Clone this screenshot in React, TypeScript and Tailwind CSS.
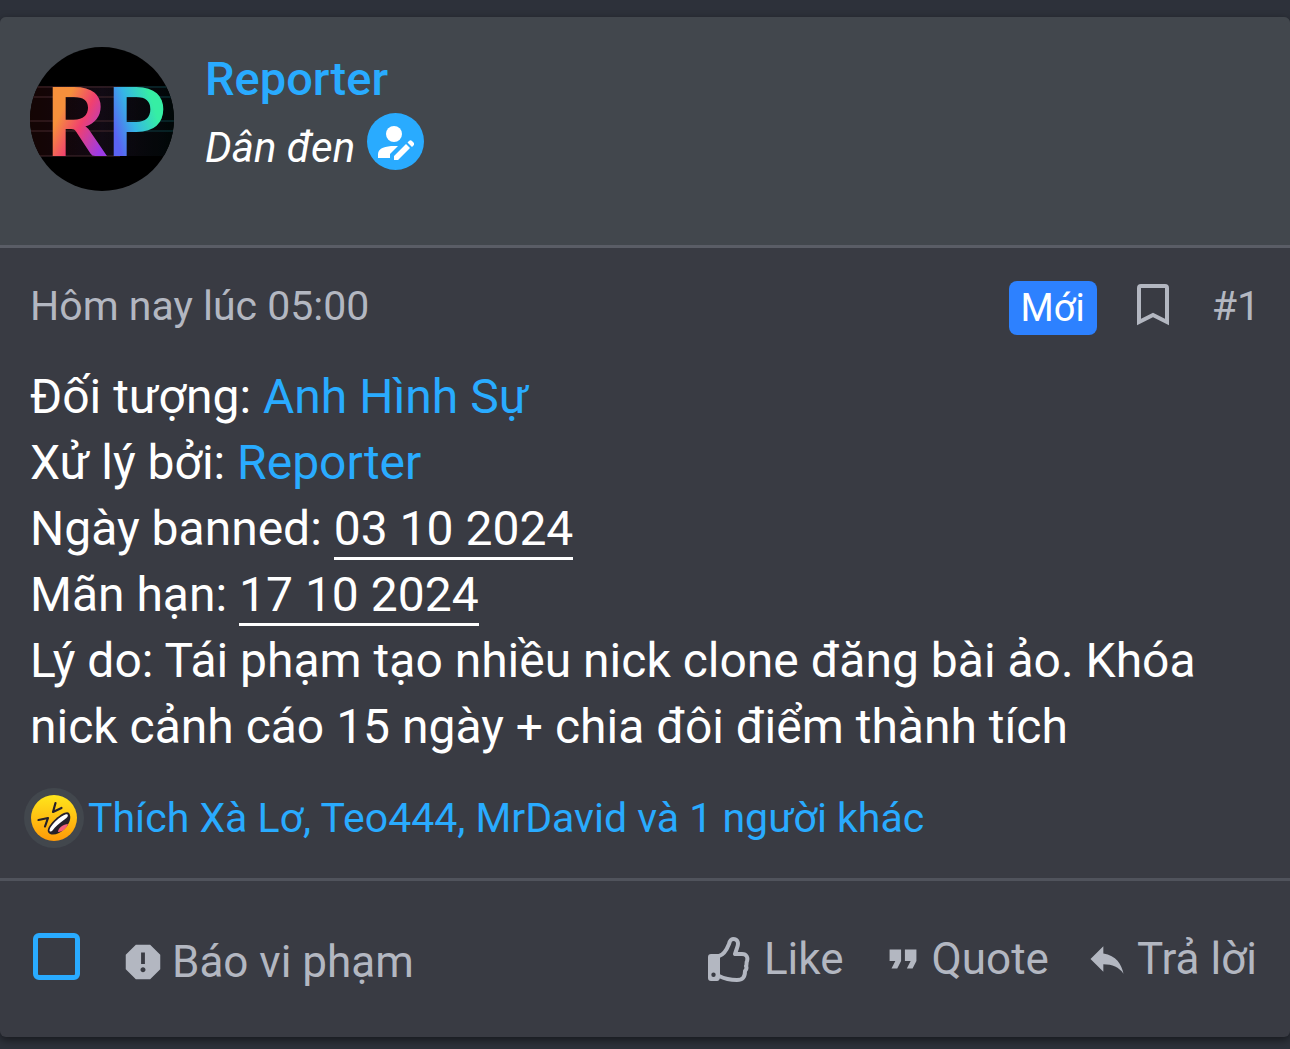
import { useState } from 'react';
import type { ReactNode } from 'react';
import { MdFormatQuote, MdReply, MdReport } from 'react-icons/md';

const reactors = 'Thích Xà Lơ, Teo444, MrDavid và 1 người khác';

function Avatar() {
  return (
    <svg viewBox="0 0 144 144" className="h-36 w-36 shrink-0 rounded-full bg-black" role="img" aria-label="Reporter">
      <defs>
        <linearGradient id="warm" gradientUnits="userSpaceOnUse" x1="22" y1="70" x2="74" y2="96">
          <stop offset="0.1" stopColor="#f6903c" />
          <stop offset="0.5" stopColor="#f0406f" />
          <stop offset="1" stopColor="#9c3be6" />
        </linearGradient>
        <linearGradient id="cool" gradientUnits="userSpaceOnUse" x1="82" y1="85" x2="130" y2="70">
          <stop offset="0.05" stopColor="#5a63f2" />
          <stop offset="0.45" stopColor="#35b5e6" />
          <stop offset="0.95" stopColor="#36eea4" />
        </linearGradient>
        <linearGradient id="band" x1="0" y1="0" x2="1" y2="0">
          <stop offset="0" stopColor="#150504" />
          <stop offset="0.5" stopColor="#120a14" />
          <stop offset="1" stopColor="#010808" />
        </linearGradient>
      </defs>
      <rect y="39" width="144" height="70" fill="url(#band)" />
      <g strokeWidth="1.500" opacity="0.6">
        <path d="M0 40H90M0 50H90M0 74H90M0 84H90M0 109H90" stroke="#4a2c32" />
        <path d="M90 40H144M90 50H144M90 74H144M90 84H144" stroke="#0f4048" />
      </g>
      <g fontFamily="Lato, sans-serif" fontWeight="700" fontSize="96">
        <text x="15" y="109" fill="url(#warm)">R</text>
        <text x="76" y="109" fill="url(#cool)">P</text>
      </g>
    </svg>
  );
}

function StarterBadge() {
  return (
    <span className="flex h-[57px] w-[57px] shrink-0 items-center justify-center rounded-full bg-[#29abff]" title="Người viết bài">
      <svg viewBox="0 0 36 36" className="h-9 w-9 fill-white" aria-hidden="true">
        <circle cx="16" cy="10" r="8" />
        <path d="M0 34v-4c0-6 8-8 16-8h4L12 30v4z" />
        <path d="M16 36v-4l12-12 4 4-12 12zM29.500 18.500l1.500-1.500c1-1 2-1 3 0l1.500 1.500c1 1 1 2 0 3L34 23z" />
      </svg>
    </span>
  );
}

function LaughIcon() {
  return (
    <span className="-ml-1.5 flex h-15 w-15 shrink-0 items-center justify-center rounded-full bg-[#42474d]">
      <svg viewBox="0 0 46 46" className="h-[46px] w-[46px]" aria-hidden="true">
        <defs>
          <linearGradient id="face" x1="0" y1="0" x2="0" y2="1">
            <stop offset="0" stopColor="#ffe61c" />
            <stop offset="1" stopColor="#ff9a08" />
          </linearGradient>
        </defs>
        <circle cx="23" cy="23" r="23" fill="url(#face)" />
        <path d="M24.500 8l-2.500 9 8.500-4M7.500 25l9.500-2-3 8.500" fill="none" stroke="#26202a" strokeWidth="2.200" strokeLinejoin="round" strokeLinecap="round" />
        <path d="M17 37c-1.500-3 3-9 8-13.500S36 15.500 38 18c3 4 .5 11-4.500 16S20 42 17 37z" fill="#26202a" />
        <path d="M18.500 35.500c0-2.500 3.500-7 7.500-10.500s9-6.500 10.500-5.500c1 1 0 3-3 5C28.500 28 24 32 21.500 35.500c-1 1.300-3 1.300-3 0z" fill="#fff" />
        <path d="M27 37c0-4 5.500-8 10-8-1 3.500-5 8-10 8z" fill="#f5607a" />
      </svg>
    </span>
  );
}

function ThumbIcon() {
  return (
    <svg viewBox="0 0 42 45" className="h-[45px] w-[42px]" aria-hidden="true">
      <path
        d="M11 19c4-1 8-7 10-12 1-4 2-5 4-5 5 0 6 4 4 9l-2 6h7c5 0 6 4 5 7-1 2 0 4-1 5 1 2 0 4-1 5 0 6-2 9-8 9-7 0-12-1-18-4"
        fill="none"
        stroke="currentColor"
        strokeWidth="4"
        strokeLinejoin="round"
      />
      <path
        fillRule="evenodd"
        fill="currentColor"
        d="M3 17h9v23c0 2-1 4-3 4H3c-2 0-3-1-3-3V20c0-2 1-3 3-3zM5.500 35.500a2.200 2.200 0 1 0 0 4.400 2.200 2.200 0 0 0 0-4.400z"
      />
    </svg>
  );
}

function Action({ icon, label, className = 'gap-2' }: { icon: ReactNode; label: string; className?: string }) {
  return (
    <button type="button" className={`flex items-center ${className}`}>
      {icon}
      <span>{label}</span>
    </button>
  );
}

export default function App() {
  const [selected, setSelected] = useState(false);

  return (
    <div className="min-h-screen bg-[#2d313a] pt-[17px] pb-3 font-['Roboto','Noto_Sans',sans-serif] text-[#b3b7c1]">
      <article className="overflow-hidden rounded-md bg-[#393b43] shadow-[0_3px_9px_rgba(0,0,0,0.5)]">
        <header className="flex gap-[31px] border-b-3 border-[#5a5d66] bg-[#42474d] px-[30px] pt-[30px] pb-[54px]">
          <Avatar />
          <div>
            <h4 className="text-[47px] leading-16 font-medium text-[#29abff]">
              <a href="#reporter">Reporter</a>
            </h4>
            <div className="flex gap-3 pt-0.5">
              <span className="text-[42px] leading-[70px] text-white italic">Dân đen</span>
              <StarterBadge />
            </div>
          </div>
        </header>

        <section className="px-[30px]">
          <div className="flex items-start justify-between pt-[33px] text-[41px] leading-[50px]">
            <time>Hôm nay lúc 05:00</time>
            <div className="flex items-start">
              <span className="rounded-lg bg-[#2d81ff] px-3 text-[38px] leading-[54px] text-white">Mới</span>
              <button type="button" className="ml-10 pt-[3px]" aria-label="Đánh dấu">
                <svg viewBox="0 0 32 42" className="h-[42px] w-8" aria-hidden="true">
                  <path d="M2 38V4q0-2 2-2h24q2 0 2 2v34l-14-7z" fill="none" stroke="currentColor" strokeWidth="4" />
                </svg>
              </button>
              <a href="#1" className="ml-[43px]">#1</a>
            </div>
          </div>

          <div className="pt-[29px] text-5xl leading-[66px] text-white">
            <p>Đối tượng: <a href="#anh-hinh-su" className="text-[#29abff]">Anh Hình Sự</a></p>
            <p>Xử lý bởi: <a href="#reporter" className="text-[#29abff]">Reporter</a></p>
            <p>Ngày banned: <span className="border-b-3 border-white">03 10 2024</span></p>
            <p>Mãn hạn: <span className="border-b-3 border-white">17 10 2024</span></p>
            <p>Lý do: Tái phạm tạo nhiều nick clone đăng bài ảo. Khóa nick cảnh cáo 15 ngày + chia đôi điểm thành tích</p>
          </div>

          <div className="flex items-center gap-1 pt-7 pb-[30px] text-[41px] leading-15 text-[#29abff]">
            <LaughIcon />
            <a href="#reactions">{reactors}</a>
          </div>
        </section>

        <footer className="flex items-center justify-between border-t-3 border-[#50535c] px-[33px] pt-12 pb-12 text-[44px] leading-[54px]">
          <div className="flex items-center gap-10">
            <input
              type="checkbox"
              aria-label="Chọn bài viết"
              checked={selected}
              onChange={(e) => setSelected(e.target.checked)}
              className="mb-1.5 h-[47px] w-[47px] appearance-none rounded-md border-5 border-[#29abff] checked:bg-[#29abff]"
            />
            <Action icon={<MdReport className="h-[46px] w-[46px]" />} label="Báo vi phạm" className="gap-1.5 pt-1.5" />
          </div>
          <div className="flex items-center gap-9">
            <Action icon={<ThumbIcon />} label="Like" className="gap-3.5" />
            <Action icon={<MdFormatQuote className="h-[46px] w-[46px]" />} label="Quote" className="gap-1.5" />
            <Action icon={<MdReply className="h-11 w-11" />} label="Trả lời" />
          </div>
        </footer>
      </article>
    </div>
  );
}
